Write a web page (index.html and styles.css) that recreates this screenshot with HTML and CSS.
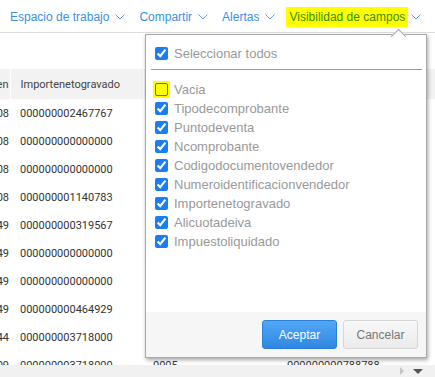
FILE: index.html
```html
<!DOCTYPE html>
<html lang="es">
<head>
    <meta charset="UTF-8">
    <meta name="viewport" content="width=device-width, initial-scale=1.0">
    <title>Visibilidad de campos</title>
    <link rel="stylesheet" href="styles.css">
</head>
<body>
    <div class="page">
        <!-- Menu superior -->
        <nav class="menu">
            <a class="menu-item">Espacio de trabajo <svg class="chev" viewBox="0 0 10 6"><path d="M0.5 0.5 L5 5 L9.5 0.5"/></svg></a>
            <a class="menu-item">Compartir <svg class="chev" viewBox="0 0 10 6"><path d="M0.5 0.5 L5 5 L9.5 0.5"/></svg></a>
            <a class="menu-item">Alertas <svg class="chev" viewBox="0 0 10 6"><path d="M0.5 0.5 L5 5 L9.5 0.5"/></svg></a>
            <a class="menu-item"><span class="marker">Visibilidad de campos</span> <svg class="chev" viewBox="0 0 10 6"><path d="M0.5 0.5 L5 5 L9.5 0.5"/></svg></a>
        </nav>

        <div class="toolbar"></div>

        <!-- Tabla de datos (columnas tapadas por el popup quedan vacias) -->
        <div class="grid-wrap">
            <table class="grid">
                <colgroup>
                    <col class="c0"><col class="c1"><col class="c2"><col class="c3">
                </colgroup>
                <thead>
                    <tr><th class="first">en</th><th>Importenetogravado</th><th></th><th></th></tr>
                </thead>
                <tbody>
                    <tr><td class="first">08</td><td>000000002467767</td><td></td><td></td></tr>
                    <tr><td class="first">08</td><td>000000000000000</td><td></td><td></td></tr>
                    <tr><td class="first">08</td><td>000000000000000</td><td></td><td></td></tr>
                    <tr><td class="first">08</td><td>000000001140783</td><td></td><td></td></tr>
                    <tr><td class="first">49</td><td>000000000319567</td><td></td><td></td></tr>
                    <tr><td class="first">49</td><td>000000000000000</td><td></td><td></td></tr>
                    <tr><td class="first">49</td><td>000000000000000</td><td></td><td></td></tr>
                    <tr><td class="first">49</td><td>000000000464929</td><td></td><td></td></tr>
                    <tr><td class="first">44</td><td>000000003718000</td><td></td><td></td></tr>
                    <tr><td class="first">09</td><td>000000003718000</td><td>0005</td><td>000000000788788</td></tr>
                </tbody>
            </table>
        </div>

        <div class="hscroll">
            <span class="arrow-right"></span>
            <span class="arrow-down"></span>
        </div>

        <!-- Popup visibilidad de campos -->
        <div class="popup">
            <div class="select-all">
                <label class="option"><input type="checkbox" checked> Seleccionar todos</label>
            </div>
            <div class="sep"></div>
            <div class="options">
                <label class="option"><span class="hl"><span class="box"></span></span> Vacia</label>
                <label class="option"><input type="checkbox" checked> Tipodecomprobante</label>
                <label class="option"><input type="checkbox" checked> Puntodeventa</label>
                <label class="option"><input type="checkbox" checked> Ncomprobante</label>
                <label class="option"><input type="checkbox" checked> Codigodocumentovendedor</label>
                <label class="option"><input type="checkbox" checked> Numeroidentificacionvendedor</label>
                <label class="option"><input type="checkbox" checked> Importenetogravado</label>
                <label class="option"><input type="checkbox" checked> Alicuotadeiva</label>
                <label class="option"><input type="checkbox" checked> Impuestoliquidado</label>
            </div>
            <div class="popup-footer">
                <button class="btn btn-ok">Aceptar</button>
                <button class="btn btn-cancel">Cancelar</button>
            </div>
        </div>
    </div>
</body>
</html>
```

FILE: styles.css
```css
body {
    margin: 0;
    font-family: "Liberation Sans", Arial, sans-serif;
    background-color: #fff;
    color: #333;
}

.page {
    position: relative;
    width: 435px;
    height: 377px;
    overflow: hidden;
}

/* Menu */
.menu {
    display: flex;
    align-items: center;
    gap: 14px;
    height: 30px;
    padding: 2px 0 0 10px;
    border-bottom: 1px solid #ddd;
    font-size: 12px;
}

.menu-item {
    display: flex;
    align-items: center;
    gap: 6px;
    color: #3a90e6;
    white-space: nowrap;
}

.chev {
    width: 10px;
    height: 6px;
    fill: none;
    stroke: #5fa0e6;
    stroke-width: 1;
}

.marker {
    background-color: #ffff00;
    color: #3a8c00;
    padding: 3px 3px;
    margin: 0 -3px;
}

.toolbar {
    height: 36px;
}

/* Tabla */
.grid-wrap {
    height: 296px;
    overflow: hidden;
}

.grid {
    table-layout: fixed;
    border-collapse: collapse;
    margin-left: -70px;
    width: 510px;
    font-family: Roboto, "Liberation Sans", sans-serif;
    font-size: 11px;
}

.c0 { width: 80px; }
.c1 { width: 133px; }
.c2 { width: 134px; }
.c3 { width: 163px; }

.grid th,
.grid td {
    padding: 0 10px;
    text-align: left;
    white-space: nowrap;
    overflow: hidden;
}

.grid th {
    height: 30px;
    background-color: #f2f2f2;
    border-right: 1px solid #fff;
    font-weight: normal;
    color: #444;
}

.grid td {
    height: 28px;
    color: #333;
}

.grid .first {
    text-align: right;
    padding-right: 1px;
}

.hscroll {
    display: flex;
    justify-content: flex-end;
    align-items: center;
    gap: 9px;
    height: 12px;
    padding-right: 12px;
    background-color: #f1f1f1;
}

.arrow-right {
    width: 0;
    height: 0;
    border-top: 4px solid transparent;
    border-bottom: 4px solid transparent;
    border-left: 4px solid #c4c4c4;
}

.arrow-down {
    width: 0;
    height: 0;
    border-left: 5px solid transparent;
    border-right: 5px solid transparent;
    border-top: 5px solid #555;
}

/* Popup */
.popup {
    position: absolute;
    top: 34px;
    left: 145px;
    width: 280px;
    height: 322px;
    display: flex;
    flex-direction: column;
    background-color: #fff;
    border: 1px solid #a9a9a9;
    box-shadow: 1px 2px 4px rgba(0, 0, 0, 0.35);
    font-size: 13px;
}

.popup::before {
    content: "";
    position: absolute;
    top: -4px;
    left: 247px;
    width: 10px;
    height: 10px;
    background-color: #fff;
    border-top: 1px solid #a9a9a9;
    border-left: 1px solid #a9a9a9;
    transform: rotate(45deg);
}

.select-all {
    position: relative;
    padding: 9px 9px 6px;
}

.sep {
    height: 1px;
    margin: 0 4px 0 5px;
    background-color: #999;
}

.options {
    padding: 10px 9px 0;
}

.option {
    display: flex;
    align-items: center;
    gap: 6px;
    height: 19px;
    color: #999;
}

.option input {
    width: 13px;
    height: 13px;
    margin: 0;
    accent-color: #1a7ef0;
}

.hl {
    display: flex;
    padding: 2px;
    margin: -2px;
    background-color: #ffff00;
}

.box {
    width: 11px;
    height: 11px;
    border: 1px solid #666;
    border-radius: 2px;
}

.popup-footer {
    display: flex;
    justify-content: flex-end;
    gap: 6px;
    margin-top: auto;
    padding: 8px 8px;
    background-color: #f6f6f6;
}

.btn {
    width: 75px;
    height: 29px;
    border-radius: 3px;
    font-family: "Liberation Sans", Arial, sans-serif;
    font-size: 12px;
    cursor: pointer;
}

.btn-ok {
    background: linear-gradient(#52a8f7, #2f87e1);
    border: 1px solid #2b7fd6;
    color: #fff;
}

.btn-cancel {
    background: linear-gradient(#f8f8f8, #ebebeb);
    border: 1px solid #d6d6d6;
    color: #777;
}
```
